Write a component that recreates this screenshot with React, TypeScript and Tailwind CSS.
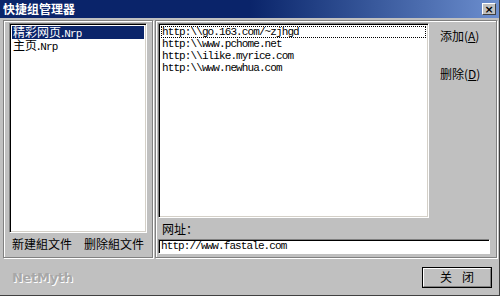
import React from "react";

const cjk = { fontFamily: '"Noto Sans CJK SC", "Noto Sans", sans-serif' };
const mono = { fontFamily: '"Liberation Mono", "Noto Sans CJK SC", monospace' };

export default function App() {
  const urls = [
    "http:\\\\go.163.com/~zjhgd",
    "http:\\\\www.pchome.net",
    "http:\\\\ilike.myrice.com",
    "http:\\\\www.newhua.com",
  ];
  return (
    <div
      className="w-[500px] h-[296px] bg-[#c0c0c0] flex flex-col border-r border-b border-[#404040] overflow-hidden text-[12px] leading-none text-black"
      style={cjk}
    >
      {/* title bar */}
      <div className="h-[18px] shrink-0 bg-gradient-to-r from-[#0a246a] via-[#0a246a] to-[#6d8fcf] flex items-center justify-between pl-[3px] pr-[3px]">
        <span className="text-white font-bold text-[12px] leading-none">快捷组管理器</span>
        <div className="w-[14px] h-[12px] bg-[#c0c0c0] border-t border-l border-white border-r border-b border-r-[#404040] border-b-[#404040] flex items-center justify-center text-[11px] leading-none text-black font-bold" style={{ fontFamily: '"DejaVu Sans", sans-serif' }}>
          ×
        </div>
      </div>

      {/* body */}
      <div className="flex gap-[2px] pl-[3px] pr-[2px] pt-[2px] h-[240px] shrink-0">
        {/* left group */}
        <div className="w-[150px] h-[238px] border border-[#808080] shadow-[inset_1px_1px_0_#fff,1px_1px_0_#fff] flex flex-col pl-[5px] pr-[5px] pt-[2px]">
          <div className="h-[210px] bg-white border-t border-l border-[#808080] border-r border-b border-r-white border-b-white shadow-[inset_1px_1px_0_#000,inset_-1px_-1px_0_#d4d0c8] p-[2px] pt-[2px]">
            <div className="h-[13px] bg-[#0a246a] text-white flex items-center pl-[1px]">
              <span>
                精彩网页.<span style={mono} className="text-[11px] tracking-[-0.9px]">Nrp</span>
              </span>
            </div>
            <div className="h-[13px] flex items-center pl-[1px]">
              <span>
                主页.<span style={mono} className="text-[11px] tracking-[-0.9px]">Nrp</span>
              </span>
            </div>
          </div>
          <div className="flex justify-between items-center h-[20px] mt-[1px] px-[3px]">
            <span>新建組文件</span>
            <span>删除組文件</span>
          </div>
        </div>

        {/* right group */}
        <div className="flex-1 h-[238px] border border-[#808080] shadow-[inset_1px_1px_0_#fff,1px_1px_0_#fff] flex flex-col pl-[2px] pr-[5px] pt-[2px]">
          <div className="flex h-[195px]">
            <div className="w-[271px] h-[195px] bg-white border-t border-l border-[#808080] border-r border-b border-r-white border-b-white shadow-[inset_1px_1px_0_#000,inset_-1px_-1px_0_#d4d0c8] p-[2px]">
              {urls.map((u, i) => (
                <div
                  key={i}
                  className={
                    "h-[12px] flex items-center pl-[1px] text-[11px] tracking-[-0.9px] " +
                    (i === 0 ? "outline-1 outline-dotted outline-black -outline-offset-1" : "")
                  }
                  style={mono}
                >
                  {u}
                </div>
              ))}
            </div>
            <div className="flex-1 flex flex-col pl-[11px] pt-[7px] gap-[26px]">
              <span>
                添加(<span className="underline">A</span>)
              </span>
              <span>
                删除(<span className="underline">D</span>)
              </span>
            </div>
          </div>
          <div className="h-[20px] flex items-center pl-[4px] pt-[2px]">网址：</div>
          <div className="h-[15px] mr-[1px] bg-white border-t border-l border-[#808080] border-r border-b border-r-white border-b-white shadow-[inset_1px_1px_0_#000] flex items-center pl-[2px] mt-[1px]">
            <span style={mono} className="text-[11px] tracking-[-0.9px]">http://www.fastale.com</span>
          </div>
        </div>
      </div>

      {/* bottom */}
      <div className="flex-1 flex items-center justify-between pl-[12px] pr-[7px] pt-[1px]">
        <span
          className="text-[13px] font-bold text-[#a8a8a8] tracking-[-0.3px]"
          style={{ fontFamily: '"DejaVu Sans", sans-serif', textShadow: "1px 1px 0 #ffffff" }}
        >
          NetMyth
        </span>
        <div className="w-[70px] h-[21px] border border-black flex">
          <div className="flex-1 border-t border-l border-white border-r border-b border-r-[#808080] border-b-[#808080] flex items-center justify-center gap-[10px]">
            <span>关</span>
            <span>闭</span>
          </div>
        </div>
      </div>
    </div>
  );
}
